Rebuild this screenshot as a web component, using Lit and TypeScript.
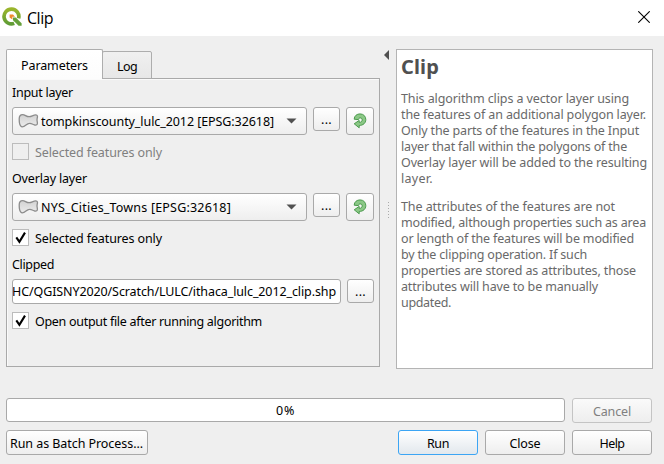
import { LitElement, html, css, svg } from "lit";
import { customElement, property } from "lit/decorators.js";

/* One line of text, tracked so that it fills the given width. */
@customElement("fit-text")
class FitText extends LitElement {
  @property() text = "";
  @property({ type: Number }) w = 0;
  static styles = css`
    :host { display: block; white-space: pre; flex: none; }
    span { display: inline-block; }
  `;
  updated() {
    const s = this.renderRoot.querySelector("span") as HTMLElement;
    s.style.letterSpacing = "0px";
    const natural = s.getBoundingClientRect().width;
    s.style.letterSpacing = (this.w - natural) / this.text.length + "px";
  }
  render() {
    return html`<span>${this.text}</span>`;
  }
}

const t = (text: string, w: number) => html`<fit-text .text=${text} .w=${w}></fit-text>`;

const logo = html`<svg class="logo" width="20" height="20" viewBox="0 0 20 20">
  <defs><linearGradient id="lg" x1="0" y1="0" x2="0" y2="1"><stop offset="0" stop-color="#9ab52c"/><stop offset="1" stop-color="#5f9c35"/></linearGradient></defs>
  <path d="M12.2 16.4A7.4 7.4 0 1 1 16.6 11.4" fill="none" stroke="url(#lg)" stroke-width="3.7"/>
  <path d="M11 10.4H13.8L19.6 16.2V18.8H16.6L11 13.2Z" fill="#65a03a"/>
  <path d="M7.6 7.4H11L13 9.8H10.4V12.4L7.6 10.6Z" fill="#ee8a2c"/>
</svg>`;

const polygon = html`<svg class="poly" width="21" height="16" viewBox="0 0 21 16">
  <defs><linearGradient id="pg" x1="0" y1="0" x2="0" y2="1"><stop offset="0" stop-color="#d2d2d2"/><stop offset="1" stop-color="#ececec"/></linearGradient></defs>
  <path d="M1.2 6C1.2 3 2.6 1.6 4.6 1.6C7 1.6 8.4 3.8 11.2 3.7C13.6 3.6 15.4 1.8 17.8 1.9C19.6 2 19.8 3.4 19.2 5.2C18.6 7.2 19.4 8.8 19.4 10.2C19.4 11.6 18.4 12.4 16.8 12C14.8 11.5 13.6 10.2 11.4 10.4C8.4 10.6 7.4 13.8 4.2 13.8C1.6 13.8 1.2 9.4 1.2 6Z" fill="url(#pg)" stroke="#8c8c8c" stroke-width="1.3"/>
</svg>`;

const refresh = html`<svg width="14" height="16" viewBox="0 0 14 16">
  <path d="M1.2 6.2C1.2 2.8 4 .9 7 .9C10.6 .9 12.8 3.4 12.8 6.6C12.8 10 10.2 12.4 6.2 12.5V14.8L1.2 10.8L6.2 7.4V9.4C8 9.4 9.2 8.4 9.2 6.9C9.2 5.6 8.4 4.9 7.2 4.9C6.2 4.9 5.6 5.6 5.4 6.6Z" fill="#8bc886" stroke="#4b9a4d" stroke-width="1"/>
</svg>`;

const tick = svg`<path d="M4.3 8.4L7.4 12.8L13 3.6" fill="none" stroke="#000" stroke-width="2.1"/>`;
const check = (on: boolean) => html`<svg class="check ${on ? "on" : ""}" width="17" height="17" viewBox="0 0 17 17">
  <rect x=".5" y=".5" width="16" height="16"/>${on ? tick : ""}</svg>`;

@customElement("app-root")
class AppRoot extends LitElement {
  static styles = css`
    :host { display: flex; flex-direction: column; width: 664px; height: 464px; background: #efefef; overflow: hidden;
      font: 12.5px/16px "Noto Sans", "DejaVu Sans", sans-serif; color: #000; }
    * { box-sizing: border-box; }
    svg { display: block; flex: none; }
    .bar { height: 36px; background: #fff; display: flex; align-items: center; padding: 0 14px 0 2px; flex: none; }
    .bar .logo { margin-top: -2px; }
    .bar .name { margin: -1px auto 0 5px; font: 16px/20px "Open Sans", sans-serif; }
    .bar .close { margin-top: -2px; }
    .main { display: flex; height: 319px; margin-top: 13px; padding-left: 6px; flex: none; }
    .left { width: 374px; display: flex; flex-direction: column; }
    .tabs { display: flex; align-items: flex-end; height: 30px; margin-bottom: -1px; z-index: 1; }
    .tab { border: 1px solid #adadad; border-radius: 2px 2px 0 0; display: flex; justify-content: center; align-items: center; }
    .tab.active { width: 97px; height: 30px; background: linear-gradient(#fff, #fcfcfc); border-bottom: 0; padding-top: 3px; }
    .tab.idle { width: 50px; height: 28px; margin-left: -1px; background: linear-gradient(#f0f0f0, #e7e7e7); padding-top: 3px; }
    .panel { height: 289px; border: 1px solid #a9a9a9; box-shadow: inset 1px 1px #fafafa; padding: 6px 5px 0; }
    .label { height: 16px; }
    .row { display: flex; align-items: flex-start; margin-top: 6px; }
    .combo { width: 295px; height: 28px; display: flex; align-items: center; padding: 0 9px 0 5px; }
    .box { border: 1px solid #a9a9a9; border-radius: 3px; background: linear-gradient(#fff, #eee); display: flex; align-items: center; }
    .combo .poly { margin-right: 2px; }
    .combo fit-text { padding-top: 1px; }
    .combo .arrow { margin-left: auto; }
    .btn { justify-content: center; }
    .more { width: 27px; height: 24px; margin-left: 6px; padding-top: 2px; }
    .sync { width: 28px; height: 28px; margin-left: 6px; }
    .opt { display: flex; align-items: center; height: 17px; margin-top: 8px; gap: 6px; }
    .opt fit-text { padding-top: 2px; }
    .off { color: #808080; }
    .gap { margin-top: 11px; }
    .check rect { fill: #efefef; stroke: #bcbcbc; }
    .check.on rect { fill: #fff; }
    .file { width: 329px; height: 25px; background: #fff; justify-content: flex-end; padding-right: 4px; overflow: hidden; }
    .split { width: 16px; padding: 1px 0 0 4px; display: flex; flex-direction: column; }
    .grip { margin: 142px 0 0 4px; }
    .help { width: 257px; height: 320px; border: 1px solid #b4b4b4; background: #fff; color: #696969; padding: 5px 0 0 4px; }
    .help h1 { margin: 0 0 13px; font: bold 20px/23px "Noto Sans", sans-serif; color: #505050; }
    .help div + div { margin-top: 12px; }
    .foot { display: flex; gap: 7px; padding-left: 6px; flex: none; }
    .status { margin-top: 30px; }
    .progress { width: 559px; height: 24px; background: #fff; justify-content: center; padding-top: 1px; }
    .b { width: 80px; height: 25px; padding-top: 2px; }
    .cancel { color: #808080; border-color: #c4c4c4; background: linear-gradient(#fafafa, #eee); }
    .run { border-color: #3ca5f4; background: linear-gradient(#fff, #e2e8ed); margin-left: auto; }
    .batch { width: 142px; padding-right: 1px; }
    .actions { margin-top: 7px; padding-right: 12px; }
  `;

  combo(name: string, w: number) {
    return html`<div class="row">
      <div class="box combo">${polygon}${t(name, w)}
        <svg class="arrow" width="11" height="6"><path d="M.5.5H10.5L5.5 5.5Z" fill="#505050"/></svg></div>
      <div class="box btn more">${t("...", 11)}</div>
      <div class="box btn sync">${refresh}</div>
    </div>`;
  }

  render() {
    const intro: [string, number][] = [
      ["This algorithm clips a vector layer using", 228],
      ["the features of an additional polygon layer.", 245],
      ["Only the parts of the features in the Input", 238],
      ["layer that fall within the polygons of the", 226],
      ["Overlay layer will be added to the resulting", 246],
      ["layer.", 32],
    ];
    const notes: [string, number][] = [
      ["The attributes of the features are not", 214],
      ["modified, although properties such as area", 245],
      ["or length of the features will be modified", 233],
      ["by the clipping operation. If such", 186],
      ["properties are stored as attributes, those", 235],
      ["attributes will have to be manually", 197],
      ["updated.", 50],
    ];
    return html`
      <div class="bar">${logo}<div class="name">${t("Clip", 26)}</div>
        <svg class="close" width="12" height="12"><path d="M.3.3L11.7 11.7M11.7.3L.3 11.7" stroke="#000" stroke-width="1.1"/></svg></div>
      <div class="main">
        <div class="left">
          <div class="tabs"><div class="tab active">${t("Parameters", 67)}</div><div class="tab idle">${t("Log", 20)}</div></div>
          <div class="panel">
            <div class="label">${t("Input layer", 61)}</div>
            ${this.combo("tompkinscounty_lulc_2012 [EPSG:32618]", 233)}
            <div class="opt off">${check(false)}${t("Selected features only", 127)}</div>
            <div class="label gap">${t("Overlay layer", 75)}</div>
            ${this.combo("NYS_Cities_Towns [EPSG:32618]", 190)}
            <div class="opt">${check(true)}${t("Selected features only", 127)}</div>
            <div class="label gap">${t("Clipped", 42)}</div>
            <div class="row"><div class="box file">${t("HC/QGISNY2020/Scratch/LULC/ithaca_lulc_2012_clip.shp", 324)}</div>
              <div class="box btn more">${t("...", 11)}</div></div>
            <div class="opt">${check(true)}${t("Open output file after running algorithm", 227)}</div>
          </div>
        </div>
        <div class="split">
          <svg width="5" height="10"><path d="M5 0V10L0 5Z" fill="#505050"/></svg>
          <svg class="grip" width="1" height="17"><path d="M.5 0V17" stroke="#aaa" stroke-dasharray="1 2"/></svg>
        </div>
        <div class="help"><h1>${t("Clip", 38)}</h1>
          <div>${intro.map(([s, w]) => t(s, w))}</div>
          <div>${notes.map(([s, w]) => t(s, w))}</div></div>
      </div>
      <div class="foot status"><div class="box progress">${t("0%", 19)}</div><div class="box btn b cancel">${t("Cancel", 38)}</div></div>
      <div class="foot actions"><div class="box btn b batch">${t("Run as Batch Process...", 133)}</div>
        <div class="box btn b run">${t("Run", 22)}</div><div class="box btn b">${t("Close", 31)}</div><div class="box btn b">${t("Help", 25)}</div></div>`;
  }
}
